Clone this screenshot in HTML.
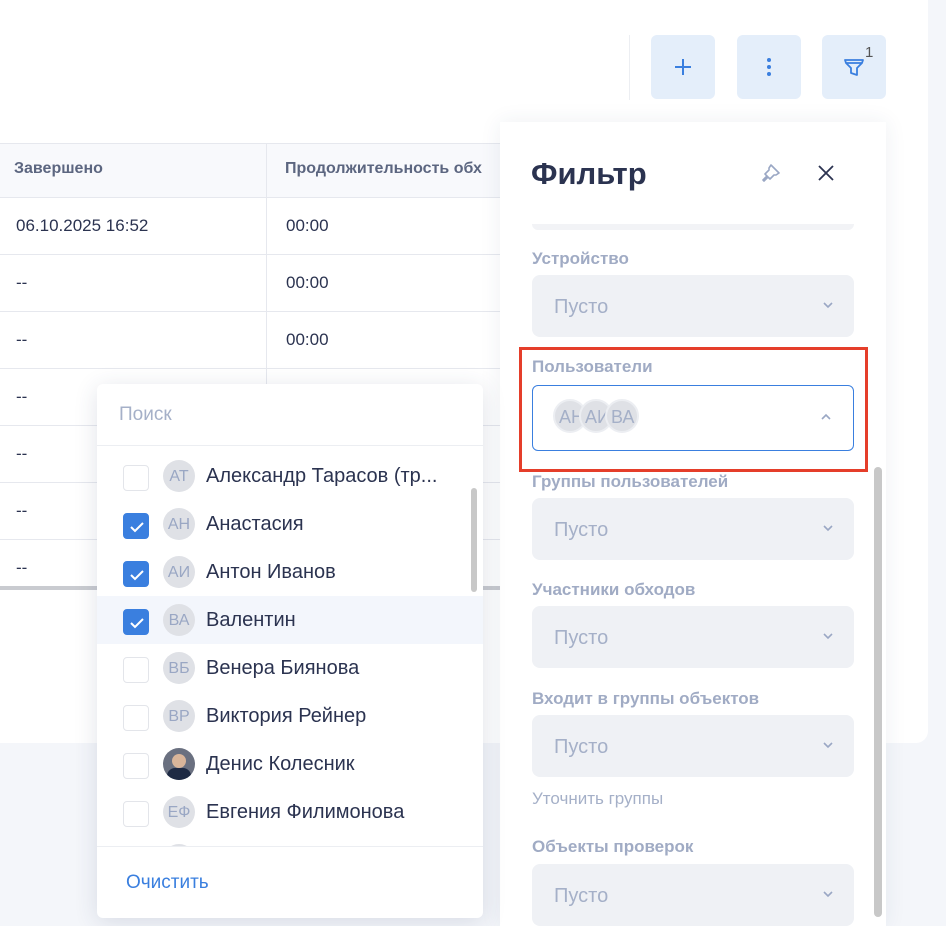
<!DOCTYPE html>
<html><head><meta charset="utf-8"><style>
*{box-sizing:border-box;margin:0;padding:0}
body{width:946px;height:926px;overflow:hidden;background:#f4f6fa;font-family:"Liberation Sans",sans-serif;position:relative;color:#2b3350}
.abs{position:absolute}
.card{left:0;top:0;width:928px;height:743px;background:#fff;border-radius:0 0 12px 0}
.btn{top:35px;width:64px;height:64px;background:#e4eefa;border-radius:6px;display:flex;align-items:center;justify-content:center}
.th{top:143px;height:55px;background:#f8f9fc;border-top:1px solid #e6e8ee;border-bottom:1px solid #e6e8ee;left:0;width:500px}
.row{left:0;width:500px;height:57px;border-bottom:1px solid #e6e8ee;font-size:17px;color:#2b3350}
.row span{position:absolute;top:18px}
.panel{left:500px;top:122px;width:386px;height:804px;background:#fff;box-shadow:0 0 20px rgba(40,60,100,.08)}
.lbl{font-size:17px;color:#a0abc4;font-weight:bold;left:532px}
.sel{left:532px;width:322px;height:62px;background:#eff1f5;border-radius:8px;font-size:20px;color:#a5b0c8}
.sel span{position:absolute;left:22px;top:21px}
.sel svg{position:absolute;right:20px;top:26px}
.dd{left:97px;top:384px;width:386px;height:534px;background:#fff;border-radius:6px;box-shadow:0 4px 24px rgba(40,60,100,.14)}
.it{left:0;width:386px;height:48px}
.cb{position:absolute;left:26px;top:13px;width:26px;height:26px;border:1px solid #e3e5ea;border-radius:4px;background:#fff}
.cb.on{background:#3a7fdf;border-color:#3a7fdf}
.av{position:absolute;left:66px;top:8px;width:32px;height:32px;border-radius:50%;background:#dfe1e6;color:#9aa7c4;font-size:16px;text-align:center;line-height:34px}
.nm{position:absolute;left:109px;top:13px;font-size:20px;color:#2b3350;white-space:nowrap}
</style></head><body>
<div class="abs card"></div>
<div class="abs" style="left:629px;top:35px;width:1px;height:65px;background:#eceef2"></div>
<div class="abs btn" style="left:651px"><svg width="20" height="20"><path d="M10 2v16M2 10h16" stroke="#3a7fdf" stroke-width="2"/></svg></div>
<div class="abs btn" style="left:737px"><svg width="6" height="20"><circle cx="3" cy="3" r="2" fill="#3a7fdf"/><circle cx="3" cy="10" r="2" fill="#3a7fdf"/><circle cx="3" cy="17" r="2" fill="#3a7fdf"/></svg></div>
<div class="abs btn" style="left:822px"><svg width="24" height="24"><path d="M3 5h18l-1 3-5 5v7l-6-2v-5L4 8z M4 8h16" fill="none" stroke="#3a7fdf" stroke-width="1.8" stroke-linejoin="round"/></svg></div>
<div class="abs" style="left:865px;top:44px;font-size:15px;color:#555">1</div>

<div class="abs th"></div>
<div class="abs" style="left:14px;top:160px;font-size:16px;font-weight:bold;color:#5c6680">Завершено</div>
<div class="abs" style="left:285px;top:160px;font-size:16px;font-weight:bold;color:#5c6680;white-space:nowrap">Продолжительность обх</div>
<div class="abs row" style="top:198px"><span style="left:16px">06.10.2025 16:52</span><span style="left:286px">00:00</span></div>
<div class="abs row" style="top:255px"><span style="left:16px">--</span><span style="left:286px">00:00</span></div>
<div class="abs row" style="top:312px"><span style="left:16px">--</span><span style="left:286px">00:00</span></div>
<div class="abs row" style="top:369px"><span style="left:16px">--</span></div>
<div class="abs row" style="top:426px"><span style="left:16px">--</span></div>
<div class="abs row" style="top:483px"><span style="left:16px">--</span></div>
<div class="abs row" style="top:540px;border:none"><span style="left:16px">--</span></div>
<div class="abs" style="left:266px;top:143px;width:1px;height:445px;background:#e6e8ee"></div>
<div class="abs" style="left:0;top:586px;width:500px;height:4px;background:#c9cbd0"></div>

<div class="abs panel"></div>
<div class="abs" style="left:531px;top:156px;font-size:31px;font-weight:bold;color:#2b3350">Фильтр</div>
<svg class="abs" style="left:758px;top:162px" width="24" height="24"><path d="M13 3l8 8-3 2-2 0-4 4-2-2-4 4-1-1 4-4-2-2 4-4 0-2z" fill="none" stroke="#9aa7c4" stroke-width="1.6" stroke-linejoin="round"/></svg>
<svg class="abs" style="left:817px;top:164px" width="18" height="18"><path d="M2 2l14 14M16 2L2 16" stroke="#2b3350" stroke-width="1.8"/></svg>
<div class="abs" style="left:532px;top:224px;width:322px;height:6px;border-radius:0 0 8px 8px;background:#f2f3f6"></div>

<div class="abs lbl" style="top:249px">Устройство</div>
<div class="abs sel" style="top:275px"><span>Пусто</span><svg width="12" height="8"><path d="M2 2l4 4 4-4" fill="none" stroke="#9aa7c4" stroke-width="1.6"/></svg></div>
<div class="abs lbl" style="top:357px">Пользователи</div>
<div class="abs" style="left:532px;top:385px;width:322px;height:66px;border:1.5px solid #3a7fdf;border-radius:6px;background:#fff"></div>
<div class="abs" style="left:553px;top:399px;width:34px;height:34px;border-radius:50%;background:#dfe1e6;border:2px solid #eceef2;color:#a5b0c8;font-size:18px;line-height:32px;padding-left:4px;overflow:hidden">АН</div>
<div class="abs" style="left:579px;top:399px;width:34px;height:34px;border-radius:50%;background:#dfe1e6;border:2px solid #eceef2;color:#a5b0c8;font-size:18px;line-height:32px;padding-left:4px;overflow:hidden">АИ</div>
<div class="abs" style="left:605px;top:399px;width:34px;height:34px;border-radius:50%;background:#dfe1e6;border:2px solid #eceef2;color:#a5b0c8;font-size:18px;line-height:32px;padding-left:4px">ВА</div>
<svg class="abs" style="left:820px;top:413px" width="12" height="8"><path d="M2 6l4-4 4 4" fill="none" stroke="#9aa7c4" stroke-width="1.6"/></svg>
<div class="abs" style="left:519px;top:347px;width:349px;height:125px;border:3px solid #e53e2a"></div>
<div class="abs" style="left:874px;top:467px;width:8px;height:450px;border-radius:4px;background:#c8c8c8"></div>

<div class="abs lbl" style="top:472px">Группы пользователей</div>
<div class="abs sel" style="top:498px"><span>Пусто</span><svg width="12" height="8"><path d="M2 2l4 4 4-4" fill="none" stroke="#9aa7c4" stroke-width="1.6"/></svg></div>
<div class="abs lbl" style="top:580px">Участники обходов</div>
<div class="abs sel" style="top:606px"><span>Пусто</span><svg width="12" height="8"><path d="M2 2l4 4 4-4" fill="none" stroke="#9aa7c4" stroke-width="1.6"/></svg></div>
<div class="abs lbl" style="top:689px">Входит в группы объектов</div>
<div class="abs sel" style="top:715px"><span>Пусто</span><svg width="12" height="8"><path d="M2 2l4 4 4-4" fill="none" stroke="#9aa7c4" stroke-width="1.6"/></svg></div>
<div class="abs" style="left:532px;top:789px;font-size:17px;color:#a5b0c8">Уточнить группы</div>
<div class="abs lbl" style="top:837px">Объекты проверок</div>
<div class="abs sel" style="top:864px"><span>Пусто</span><svg width="12" height="8"><path d="M2 2l4 4 4-4" fill="none" stroke="#9aa7c4" stroke-width="1.6"/></svg></div>

<div class="abs dd">
 <div class="abs" style="left:22px;top:20px;font-size:19px;color:#a5b0c8">Поиск</div>
 <div class="abs" style="left:0;top:61px;width:386px;height:1px;background:#eceef2"></div>
 <div class="abs" style="left:0;top:62px;width:386px;height:400px;overflow:hidden">
  <div class="abs it" style="top:6px"><div class="cb"></div><div class="av">АТ</div><div class="nm">Александр Тарасов (тр...</div></div>
  <div class="abs it" style="top:54px"><div class="cb on"><svg width="26" height="26"><path d="M7 13l4 4 8-8" fill="none" stroke="#fff" stroke-width="2"/></svg></div><div class="av">АН</div><div class="nm">Анастасия</div></div>
  <div class="abs it" style="top:102px"><div class="cb on"><svg width="26" height="26"><path d="M7 13l4 4 8-8" fill="none" stroke="#fff" stroke-width="2"/></svg></div><div class="av">АИ</div><div class="nm">Антон Иванов</div></div>
  <div class="abs it" style="top:150px;background:#f3f6fc"><div class="cb on"><svg width="26" height="26"><path d="M7 13l4 4 8-8" fill="none" stroke="#fff" stroke-width="2"/></svg></div><div class="av">ВА</div><div class="nm">Валентин</div></div>
  <div class="abs it" style="top:198px"><div class="cb"></div><div class="av">ВБ</div><div class="nm">Венера Биянова</div></div>
  <div class="abs it" style="top:246px"><div class="cb"></div><div class="av">ВР</div><div class="nm">Виктория Рейнер</div></div>
  <div class="abs it" style="top:294px"><div class="cb"></div><div class="av" style="background:#6a7080;overflow:hidden"><div style="position:absolute;left:9px;top:6px;width:14px;height:14px;border-radius:50%;background:#d9b59a"></div><div style="position:absolute;left:4px;top:20px;width:24px;height:14px;border-radius:8px 8px 0 0;background:#1e2a44"></div></div><div class="nm">Денис Колесник</div></div>
  <div class="abs it" style="top:342px"><div class="cb"></div><div class="av">ЕФ</div><div class="nm">Евгения Филимонова</div></div>
  <div class="abs it" style="top:390px"><div class="av"></div></div>
 </div>
 <div class="abs" style="left:374px;top:104px;width:6px;height:104px;border-radius:3px;background:#c8c8c8"></div>
 <div class="abs" style="left:0;top:462px;width:386px;height:1px;background:#eceef2"></div>
 <div class="abs" style="left:29px;top:488px;font-size:19px;color:#3a7fdf">Очистить</div>
</div>
</body></html>
